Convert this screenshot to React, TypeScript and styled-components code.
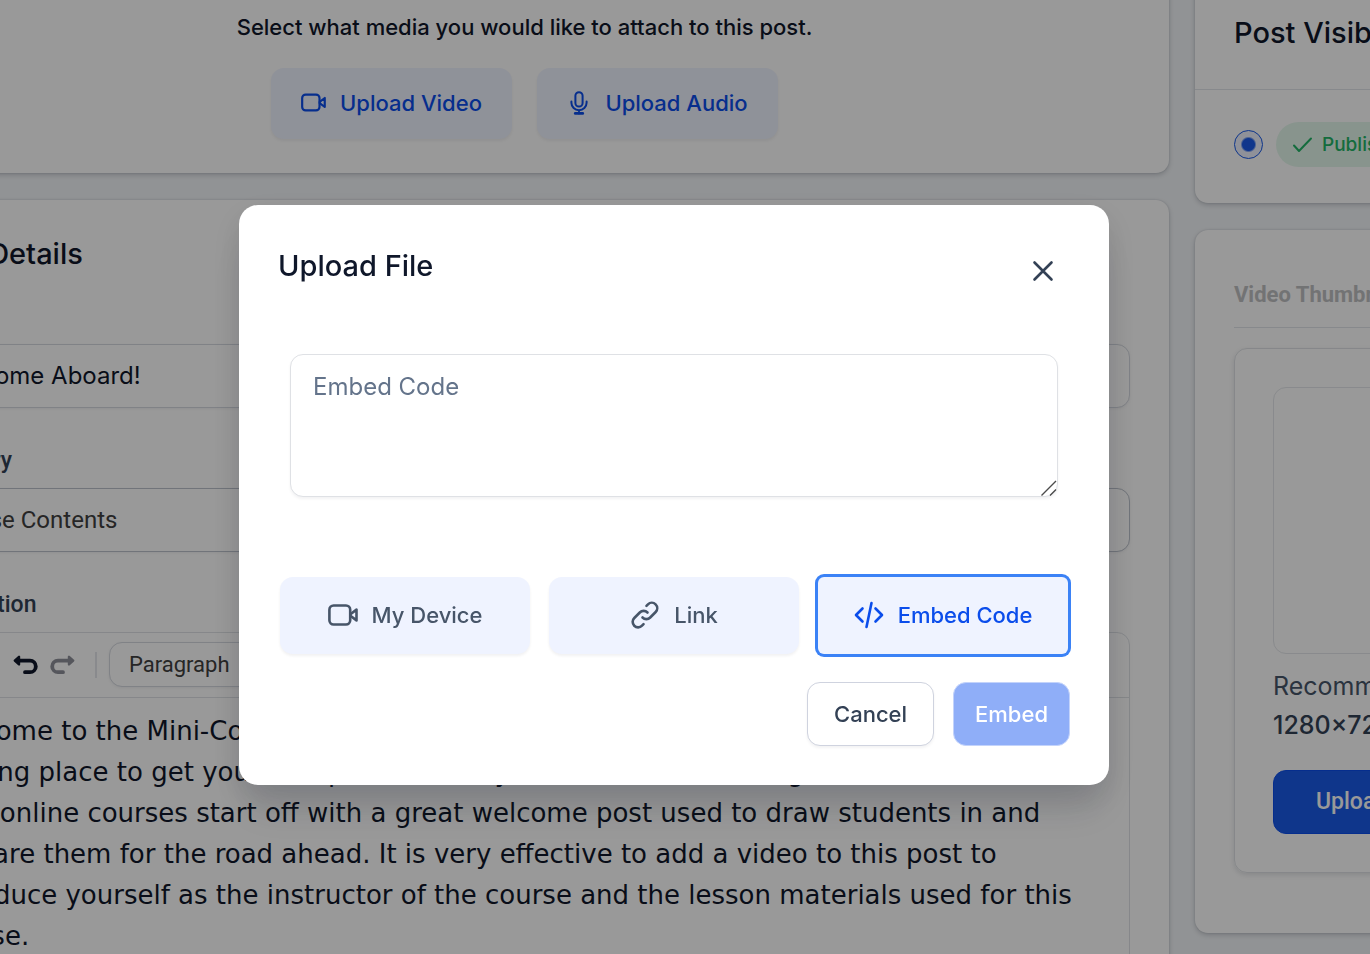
import React from "react";
import styled, { createGlobalStyle, css } from "styled-components";

const sans = `Inter, "Liberation Sans", sans-serif`;
const roboto = `Roboto, "Liberation Sans", sans-serif`;

const GlobalStyle = createGlobalStyle`
  *, *::before, *::after { box-sizing: border-box; }
  body { margin: 0; font-family: ${sans}; color: #0f172a; background: #f2f5f8; }
  button, input, select, textarea { font: inherit; color: inherit; margin: 0; }
  h1, h2, h3, p { margin: 0; font-weight: 500; }
`;

const Page = styled.div`
  height: 100vh;
  overflow: hidden;
  background: #f2f5f8;
`;

const Columns = styled.div`
  display: grid;
  grid-template-columns: minmax(0, 1fr) 560px;
  gap: 26px;
  align-items: start;
  margin: -40px -385px 0 -120px;
`;

const Column = styled.div`
  display: flex;
  flex-direction: column;
  gap: 27px;
`;

const Card = styled.section`
  background: #fff;
  border-radius: 13px;
  box-shadow: 0 2px 5px rgba(15, 23, 42, 0.2), 0 0 2px rgba(15, 23, 42, 0.15);
`;

const MediaCard = styled(Card)`
  display: flex;
  flex-direction: column;
  align-items: center;
  gap: 24px;
  padding: 50px 39px 34px;
`;

const MediaText = styled.p`
  font-size: 22px;
  line-height: 34px;
`;

const ButtonRow = styled.div`
  display: flex;
  gap: 25px;
`;

const SoftButton = styled.button`
  display: flex;
  align-items: center;
  justify-content: center;
  gap: 14px;
  padding: 0 6px 2px;
  border: 0;
  border-radius: 13px;
  background: #eff3ff;
  font-size: 22px;
  font-weight: 500;
  box-shadow: 0 2px 3px rgba(15, 23, 42, 0.06);
`;

const UploadButton = styled(SoftButton)`
  min-width: 241px;
  height: 71px;
  color: #0b4deb;
`;

const DetailsCard = styled(Card)`
  padding: 37px 39px 60px;
`;

const CardTitle = styled.h2`
  font-size: 29px;
  line-height: 34px;
`;

const DetailsForm = styled.form`
  display: flex;
  flex-direction: column;
  gap: 37px;
  margin-top: 30px;
`;

const Field = styled.div`
  display: flex;
  flex-direction: column;
  gap: 11px;
`;

const Label = styled.label`
  font: 500 23px/32px ${roboto};
  color: #334155;
`;

const control = css`
  width: 100%;
  height: 64px;
  padding: 0 19px;
  border: 1px solid #d5d9e0;
  border-radius: 13px;
  background: #fff;
  appearance: none;
  box-shadow: 0 1px 3px rgba(15, 23, 42, 0.06);
`;

const TextInput = styled.input`
  ${control}
  padding-bottom: 2px;
  font-size: 24px;
`;

const SelectInput = styled.select`
  ${control}
  border-color: #bcc2cc;
  font-family: ${roboto};
  font-size: 24px;
  color: #404040;
`;

const Editor = styled.div`
  border: 1px solid #dfe2e6;
  border-radius: 13px;
`;

const Toolbar = styled.div`
  display: flex;
  align-items: center;
  height: 65px;
  padding: 0 0 1px 93px;
  border-bottom: 1px solid #dfe2e6;
`;

const ToolButton = styled.button<{ $muted?: boolean }>`
  display: flex;
  width: 37px;
  padding: 0;
  border: 0;
  background: none;
  color: ${(p) => (p.$muted ? "#8e9099" : "#0f172a")};
`;

const ToolDivider = styled.span`
  width: 2px;
  height: 26px;
  margin: 0 12px 0 8px;
  background: #e5e7eb;
`;

const StyleSelect = styled.select`
  ${control}
  width: 220px;
  height: 45px;
  font-family: ${roboto};
  font-size: 22px;
  color: #404040;
`;

const EditorBody = styled.p`
  padding: 13px 14px;
  font: 400 26px/41px Verdana, "DejaVu Sans", sans-serif;
  white-space: nowrap;
`;

const VisibilityHead = styled.div`
  padding: 56px 39px 39px;
  border-bottom: 1px solid #e2e5ea;
`;

const VisibilityBody = styled.label`
  display: flex;
  align-items: center;
  gap: 13px;
  padding: 32px 39px 36px;
`;

const Radio = styled.input`
  appearance: none;
  width: 29px;
  height: 29px;
  border: 1px solid #1658e8;
  border-radius: 50%;
  background: radial-gradient(circle, #1b5bea 6px, #eef2ff 8px);
`;

const Pill = styled.span`
  display: flex;
  align-items: center;
  gap: 9px;
  height: 45px;
  padding: 0 16px;
  border-radius: 23px;
  background: #e3f7ec;
  color: #22b566;
  font-size: 19px;
  font-weight: 500;
`;

const ThumbCard = styled(Card)`
  padding: 48px 39px 60px;
`;

const ThumbTitle = styled.h2`
  padding-bottom: 15px;
  border-bottom: 1px solid #e2e5ea;
  font: 700 22px/34px ${roboto};
  color: #bfc0c2;
`;

const ThumbPanel = styled.div`
  margin-top: 20px;
  padding: 38px;
  border: 1px solid #dfe2e6;
  border-radius: 13px;
  box-shadow: 0 2px 5px rgba(15, 23, 42, 0.12);
`;

const ThumbBox = styled.div`
  height: 267px;
  margin-bottom: 13px;
  border: 1px solid #e5e7eb;
  border-radius: 13px;
`;

const ThumbText = styled.p<{ $strong?: boolean }>`
  font-size: 25px;
  line-height: 39px;
  font-weight: ${(p) => (p.$strong ? 500 : 400)};
  color: ${(p) => (p.$strong ? "#334155" : "#475569")};
`;

const PrimaryButton = styled.button`
  height: 64px;
  margin-top: 25px;
  padding: 0 42px;
  border: 1px solid #0b4deb;
  border-radius: 13px;
  background: #195be8;
  color: #fff;
  font: 500 23px/32px ${roboto};
`;

const Overlay = styled.div`
  position: fixed;
  inset: 0;
  display: flex;
  align-items: center;
  justify-content: center;
  padding: 36px 22px 0 0;
  background: rgba(0, 0, 0, 0.4);
`;

const Dialog = styled.div`
  width: 870px;
  max-width: 100%;
  padding: 39px;
  border-radius: 19px;
  background: #fff;
  box-shadow: 0 32px 40px -8px rgba(15, 23, 42, 0.12), 0 12px 32px rgba(15, 23, 42, 0.12);
`;

const DialogHead = styled.header`
  display: flex;
  align-items: center;
  justify-content: space-between;
  height: 54px;
`;

const DialogTitle = styled.h1`
  font-size: 29px;
  line-height: 44px;
  padding-bottom: 10px;
`;

const CloseButton = styled.button`
  display: flex;
  padding: 11px;
  border: 0;
  background: none;
  color: #334155;
`;

const EmbedField = styled.div`
  position: relative;
  margin: 56px 12px 80px;
`;

const EmbedInput = styled.textarea`
  display: block;
  width: 100%;
  height: 143px;
  padding: 15px 22px;
  border: 1px solid #dfe1e5;
  border-radius: 13px;
  background: #fff;
  font-size: 24px;
  line-height: 34px;
  resize: none;
  box-shadow: 0 2px 3px rgba(15, 23, 42, 0.05);
  &::placeholder { color: #64748b; opacity: 1; }
`;

const ResizeGrip = styled.svg`
  position: absolute;
  right: 1px;
  bottom: 1px;
`;

const Sources = styled.div`
  display: grid;
  grid-template-columns: repeat(3, 1fr);
  gap: 19px;
  padding: 0 2px;
`;

const SourceButton = styled(SoftButton)<{ $active?: boolean }>`
  height: 77px;
  color: #475569;
  ${(p) =>
    p.$active &&
    css`
      color: #0b4deb;
      border-radius: 6px;
      box-shadow: 0 0 0 3px #3b82f6;
    `}
`;

const Actions = styled.footer`
  display: flex;
  justify-content: flex-end;
  gap: 19px;
  margin-top: 28px;
`;

const ActionButton = styled.button<{ $primary?: boolean }>`
  height: 64px;
  padding: 0 ${(p) => (p.$primary ? 21 : 26)}px;
  border: 1px solid ${(p) => (p.$primary ? "#c3d3fb" : "#cfd3df")};
  border-radius: 13px;
  background: ${(p) => (p.$primary ? "#8faef8" : "#fff")};
  color: ${(p) => (p.$primary ? "#fff" : "#334155")};
  font-size: 22px;
  font-weight: 500;
  box-shadow: ${(p) => (p.$primary ? "none" : "0 2px 3px rgba(15, 23, 42, 0.05)")};
`;

const line = { fill: "none", stroke: "currentColor", strokeLinecap: "round", strokeLinejoin: "round" } as const;

const VideoIcon = ({ size = 30 }: { size?: number }) => (
  <svg width={size} height={size} viewBox="0 0 30 30" {...line} strokeWidth={2.6}>
    <rect x="1.4" y="5.5" width="20.8" height="19" rx="4.2" />
    <path d="M22.4 14.3 28.5 9.6v10.8l-6.1-4.7z" />
  </svg>
);

const MicIcon = () => (
  <svg width="24" height="24" viewBox="0 0 24 24" {...line} strokeWidth={2}>
    <rect x="8.4" y="1.2" width="7.2" height="14.3" rx="3.6" />
    <path d="M4.4 10.5v1.3a7.6 7.4 0 0 0 15.2 0v-1.3M12 19.4v3" />
    <path d="M8.2 22.4h7.6" strokeWidth={2.6} />
  </svg>
);

const LinkIcon = () => (
  <svg width="30" height="30" viewBox="1 1 22 22" {...line} strokeWidth={1.9}>
    <path d="M13.828 10.172a4 4 0 0 0-5.656 0l-4 4a4 4 0 1 0 5.656 5.656l1.102-1.101m-.758-4.899a4 4 0 0 0 5.656 0l4-4a4 4 0 0 0-5.656-5.656l-1.1 1.1" />
  </svg>
);

const CodeIcon = () => (
  <svg width="30" height="30" viewBox="0 0 30 30" {...line} strokeWidth={2.6}>
    <path d="M8.5 8.5 2 15l6.5 6.5M21.5 8.5 28 15l-6.5 6.5M17.5 3l-5 24" />
  </svg>
);

const UndoIcon = ({ flip }: { flip?: boolean }) => (
  <svg width="25" height="20" viewBox="0 0 25 20" {...line} strokeWidth={3.8}>
    <g transform={flip ? "translate(25 0) scale(-1 1)" : undefined}>
      <path d="M5 5.6h12a5.7 5.7 0 0 1 0 11.6h-5" />
      <path d="M1.8 5.6 6 1.8v7.6z" fill="currentColor" strokeWidth={2.4} />
    </g>
  </svg>
);

export default function App() {
  return (
    <>
      <GlobalStyle />
      <Page>
        <Columns>
          <Column>
            <MediaCard>
              <MediaText>Select what media you would like to attach to this post.</MediaText>
              <ButtonRow>
                <UploadButton type="button"><VideoIcon size={25} />Upload Video</UploadButton>
                <UploadButton type="button"><MicIcon />Upload Audio</UploadButton>
              </ButtonRow>
            </MediaCard>
            <DetailsCard>
              <CardTitle>Post Details</CardTitle>
              <DetailsForm>
                <Field>
                  <Label htmlFor="title">Title</Label>
                  <TextInput id="title" defaultValue="Welcome Aboard!" />
                </Field>
                <Field>
                  <Label htmlFor="category">Category</Label>
                  <SelectInput id="category"><option>Course Contents</option></SelectInput>
                </Field>
                <Field>
                  <Label as="span">Description</Label>
                  <Editor>
                    <Toolbar>
                      <ToolButton type="button" aria-label="Undo"><UndoIcon /></ToolButton>
                      <ToolButton type="button" aria-label="Redo" $muted><UndoIcon flip /></ToolButton>
                      <ToolDivider />
                      <StyleSelect aria-label="Text style"><option>Paragraph</option></StyleSelect>
                    </Toolbar>
                    <EditorBody>
                      Welcome to the Mini-Course Blueprint! This is the<br />
                      landing place to get your first product ready to launch and earning!<br />
                      Best online courses start off with a great welcome post used to draw students in and<br />
                      prepare them for the road ahead. It is very effective to add a video to this post to<br />
                      introduce yourself as the instructor of the course and the lesson materials used for this<br />
                      course.
                    </EditorBody>
                  </Editor>
                </Field>
              </DetailsForm>
            </DetailsCard>
          </Column>
          <Column>
            <Card>
              <VisibilityHead><CardTitle>Post Visibility</CardTitle></VisibilityHead>
              <VisibilityBody>
                <Radio type="radio" name="visibility" defaultChecked />
                <Pill>
                  <svg width="21" height="18" viewBox="0 0 21 18" {...line} strokeWidth={2}><path d="m2 9.5 5 5.5L19 2.5" /></svg>
                  Published
                </Pill>
              </VisibilityBody>
            </Card>
            <ThumbCard>
              <ThumbTitle>Video Thumbnail</ThumbTitle>
              <ThumbPanel>
                <ThumbBox />
                <ThumbText>Recommended dimensions</ThumbText>
                <ThumbText $strong>1280×720</ThumbText>
                <PrimaryButton type="button">Upload Image</PrimaryButton>
              </ThumbPanel>
            </ThumbCard>
          </Column>
        </Columns>
      </Page>
      <Overlay>
        <Dialog role="dialog" aria-modal="true" aria-labelledby="dialog-title">
          <DialogHead>
            <DialogTitle id="dialog-title">Upload File</DialogTitle>
            <CloseButton type="button" aria-label="Close">
              <svg width="32" height="32" viewBox="0 0 32 32" {...line} strokeWidth={2.6}><path d="m7.5 7.5 17 17M24.5 7.5l-17 17" /></svg>
            </CloseButton>
          </DialogHead>
          <EmbedField>
            <EmbedInput aria-label="Embed Code" placeholder="Embed Code" />
            <ResizeGrip width="16" height="16" viewBox="0 0 16 16" fill="none" stroke="#4b4b4b" strokeWidth="1.4"><path d="M.5 15.5 15 1M9 15.5 15 9.5" /></ResizeGrip>
          </EmbedField>
          <Sources>
            <SourceButton type="button"><VideoIcon />My Device</SourceButton>
            <SourceButton type="button"><LinkIcon />Link</SourceButton>
            <SourceButton type="button" $active><CodeIcon />Embed Code</SourceButton>
          </Sources>
          <Actions>
            <ActionButton type="button">Cancel</ActionButton>
            <ActionButton type="button" $primary>Embed</ActionButton>
          </Actions>
        </Dialog>
      </Overlay>
    </>
  );
}
